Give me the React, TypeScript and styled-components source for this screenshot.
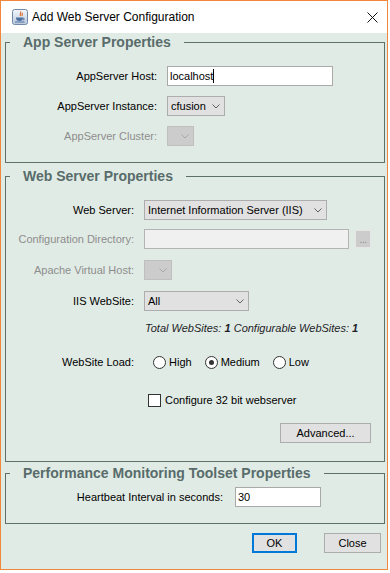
import React from 'react';
import styled, { createGlobalStyle } from 'styled-components';

const GlobalStyle = createGlobalStyle`
  html, body { margin: 0; padding: 0; background: #ffffff; }
  body { font-family: "Liberation Sans", Arial, sans-serif; font-size: 11px; color: #000; }
  *, *::before, *::after { box-sizing: border-box; }
`;

const Window = styled.div`
  width: 388px;
  height: 570px;
  border: 1px solid #f0873a;
  background: #e1ebe5;
  display: flex;
  flex-direction: column;
`;

const TitleBar = styled.div`
  height: 32px;
  flex-shrink: 0;
  background: #ffffff;
  display: flex;
  align-items: center;
  padding-left: 11px;
  padding-right: 9px;
`;

const TitleText = styled.span`
  margin-left: 4px;
  font-size: 12px;
  color: #000;
`;

const CloseIcon = styled.svg`
  margin-left: auto;
  display: block;
`;

const Body = styled.div`
  flex: 1;
  display: flex;
  flex-direction: column;
  padding: 0 2px 0 4px;
`;

const Group = styled.fieldset<{ $mt: number; $pt: number; $pb: number }>`
  margin: ${p => p.$mt}px 0 0 0;
  padding: ${p => p.$pt}px 13px ${p => p.$pb}px 0;
  border: 1px solid #5e7169;
  min-width: 0;
  display: flex;
  flex-direction: column;
`;

const Legend = styled.legend`
  margin-left: 4px;
  padding: 0 13px;
  font-size: 14px;
  font-weight: bold;
  line-height: 18px;
  color: #586c6b;
`;

const Row = styled.div<{ $label: number; $mt?: number; $gap?: number }>`
  display: grid;
  grid-template-columns: ${p => p.$label}px 1fr;
  column-gap: ${p => p.$gap ?? 10}px;
  align-items: center;
  height: 20px;
  margin-top: ${p => p.$mt ?? 0}px;
`;

const Label = styled.span<{ $disabled?: boolean }>`
  text-align: right;
  white-space: nowrap;
  color: ${p => (p.$disabled ? '#8d8d8d' : '#000')};
`;

const Cell = styled.div<{ $pl?: number }>`
  display: flex;
  align-items: center;
  padding-left: ${p => p.$pl ?? 0}px;
  min-width: 0;
`;

const TextField = styled.div<{ $w: number; $disabled?: boolean }>`
  width: ${p => p.$w}px;
  height: 20px;
  background: ${p => (p.$disabled ? '#f0f0f0' : '#ffffff')};
  border: 1px solid ${p => (p.$disabled ? '#b4b4b4' : '#a9a9a9')};
  display: flex;
  align-items: center;
  padding-left: 2px;
  white-space: nowrap;
`;

const Caret = styled.span`
  display: inline-block;
  width: 1px;
  height: 14px;
  background: #000;
`;

const Combo = styled.div<{ $w: number; $disabled?: boolean }>`
  width: ${p => p.$w}px;
  height: 20px;
  background: ${p => (p.$disabled ? '#cccccc' : '#e1e1e1')};
  border: 1px solid ${p => (p.$disabled ? '#bfbfbf' : '#adadad')};
  display: flex;
  align-items: center;
  justify-content: space-between;
  padding: 0 4px 0 3px;
  white-space: nowrap;
  color: #000;
`;

const Chevron = styled.svg`
  display: block;
  flex-shrink: 0;
  margin-left: auto;
`;

const BrowseButton = styled.div`
  width: 16px;
  height: 18px;
  margin-left: 6px;
  background: #cccccc;
  border: 1px solid #e6e6e6;
  color: #8a8a8a;
  font-size: 10px;
  line-height: 18px;
  text-align: center;
  letter-spacing: -0.5px;
`;

const InfoText = styled.span`
  font-style: italic;
  color: #1e1e28;
  white-space: nowrap;
`;

const RadioGroup = styled.div`
  display: flex;
  align-items: center;
  gap: 13px;
  padding-left: 9px;
`;

const RadioItem = styled.label`
  display: flex;
  align-items: center;
  gap: 3px;
  white-space: nowrap;
`;

const RadioCircle = styled.span<{ $checked?: boolean }>`
  width: 13px;
  height: 13px;
  border-radius: 50%;
  border: 1px solid #333333;
  background: #ffffff;
  display: flex;
  align-items: center;
  justify-content: center;
  &::after {
    content: '';
    display: ${p => (p.$checked ? 'block' : 'none')};
    width: 5px;
    height: 5px;
    border-radius: 50%;
    background: #333333;
  }
`;

const CheckItem = styled.label`
  display: flex;
  align-items: center;
  gap: 4px;
  padding-left: 4px;
  white-space: nowrap;
`;

const CheckBox = styled.span`
  width: 13px;
  height: 13px;
  border: 1px solid #333333;
  background: #ffffff;
`;

const ActionRow = styled.div<{ $mt: number; $mr?: number; $gap?: number }>`
  display: flex;
  justify-content: flex-end;
  gap: ${p => p.$gap ?? 0}px;
  margin-top: ${p => p.$mt}px;
  margin-right: ${p => p.$mr ?? 0}px;
`;

const Button = styled.div<{ $w: number; $default?: boolean }>`
  width: ${p => p.$w}px;
  height: 20px;
  background: #e1e1e1;
  border: 1px solid ${p => (p.$default ? '#0078d7' : '#adadad')};
  box-shadow: ${p => (p.$default ? 'inset 0 0 0 1px #0078d7' : 'none')};
  display: flex;
  align-items: center;
  justify-content: center;
  color: #000;
  font-size: 11px;
`;

const ChevronIcon: React.FC<{ disabled?: boolean }> = ({ disabled }) => (
  <Chevron width="8" height="5" viewBox="0 0 8 5">
    <polyline points="0.5,0.5 4,4 7.5,0.5" fill="none" stroke={disabled ? '#a8a8a8' : '#606060'} strokeWidth="1" />
  </Chevron>
);

const JavaIcon: React.FC = () => (
  <svg width="16" height="16" viewBox="0 0 16 16" style={{ display: 'block' }}>
    <defs>
      <linearGradient id="jbg" x1="0" y1="0" x2="0" y2="1">
        <stop offset="0" stopColor="#f2f6fb" />
        <stop offset="1" stopColor="#b9c9dd" />
      </linearGradient>
    </defs>
    <rect x="0.5" y="0.5" width="15" height="15" rx="2" fill="url(#jbg)" stroke="#7188a8" />
    <path d="M8.5 2.5 C10 4 7 5 8.5 7 M10 4 C11 5 9.5 6 10.2 7" fill="none" stroke="#e0621c" strokeWidth="1.1" />
    <path d="M4 8.5 H11 C11 11 10 12 7.5 12 C5 12 4 11 4 8.5 Z" fill="#4b6e9f" />
    <path d="M11 9 C12.8 9 12.8 11 11 11" fill="none" stroke="#4b6e9f" strokeWidth="0.9" />
    <path d="M3 13 H12.5" stroke="#4b6e9f" strokeWidth="1" />
  </svg>
);

export default function App() {
  return (
    <>
      <GlobalStyle />
      <Window>
        <TitleBar>
          <JavaIcon />
          <TitleText>Add Web Server Configuration</TitleText>
          <CloseIcon width="11" height="11" viewBox="0 0 11 11">
            <path d="M0.5 0.5 L10.5 10.5 M10.5 0.5 L0.5 10.5" stroke="#111" strokeWidth="1" fill="none" />
          </CloseIcon>
        </TitleBar>
        <Body>
          <Group $mt={0} $pt={15} $pb={16}>
            <Legend>App Server Properties</Legend>
            <Row $label={151}>
              <Label>AppServer Host:</Label>
              <Cell>
                <TextField $w={166}>localhost<Caret /></TextField>
              </Cell>
            </Row>
            <Row $label={151} $mt={10}>
              <Label>AppServer Instance:</Label>
              <Cell>
                <Combo $w={58}>cfusion<ChevronIcon /></Combo>
              </Cell>
            </Row>
            <Row $label={151} $mt={10}>
              <Label $disabled>AppServer Cluster:</Label>
              <Cell>
                <Combo $w={27} $disabled><ChevronIcon disabled /></Combo>
              </Cell>
            </Row>
          </Group>

          <Group $mt={4} $pt={15} $pb={18}>
            <Legend>Web Server Properties</Legend>
            <Row $label={128}>
              <Label>Web Server:</Label>
              <Cell>
                <Combo $w={183}>Internet Information Server (IIS)<ChevronIcon /></Combo>
              </Cell>
            </Row>
            <Row $label={128} $mt={9}>
              <Label $disabled>Configuration Directory:</Label>
              <Cell>
                <TextField $w={206} $disabled />
                <BrowseButton>...</BrowseButton>
              </Cell>
            </Row>
            <Row $label={128} $mt={11}>
              <Label $disabled>Apache Virtual Host:</Label>
              <Cell>
                <Combo $w={28} $disabled><ChevronIcon disabled /></Combo>
              </Cell>
            </Row>
            <Row $label={128} $mt={11}>
              <Label>IIS WebSite:</Label>
              <Cell>
                <Combo $w={105}>All<ChevronIcon /></Combo>
              </Cell>
            </Row>
            <Row $label={128} $mt={7}>
              <span />
              <Cell $pl={1}>
                <InfoText>
                  Total WebSites: <b>1</b> Configurable WebSites: <b>1</b>
                </InfoText>
              </Cell>
            </Row>
            <Row $label={128} $mt={14}>
              <Label>WebSite Load:</Label>
              <RadioGroup>
                <RadioItem><RadioCircle />High</RadioItem>
                <RadioItem><RadioCircle $checked />Medium</RadioItem>
                <RadioItem><RadioCircle />Low</RadioItem>
              </RadioGroup>
            </Row>
            <Row $label={128} $mt={18}>
              <span />
              <CheckItem><CheckBox />Configure 32 bit webserver</CheckItem>
            </Row>
            <ActionRow $mt={13}>
              <Button $w={91}>Advanced...</Button>
            </ActionRow>
          </Group>

          <Group $mt={2} $pt={5} $pb={16}>
            <Legend>Performance Monitoring Toolset Properties</Legend>
            <Row $label={217} $gap={12}>
              <Label>Heartbeat Interval in seconds:</Label>
              <Cell>
                <TextField $w={86}>30</TextField>
              </Cell>
            </Row>
          </Group>

          <ActionRow $mt={9} $mr={4} $gap={27}>
            <Button $w={45} $default>OK</Button>
            <Button $w={57}>Close</Button>
          </ActionRow>
        </Body>
      </Window>
    </>
  );
}
